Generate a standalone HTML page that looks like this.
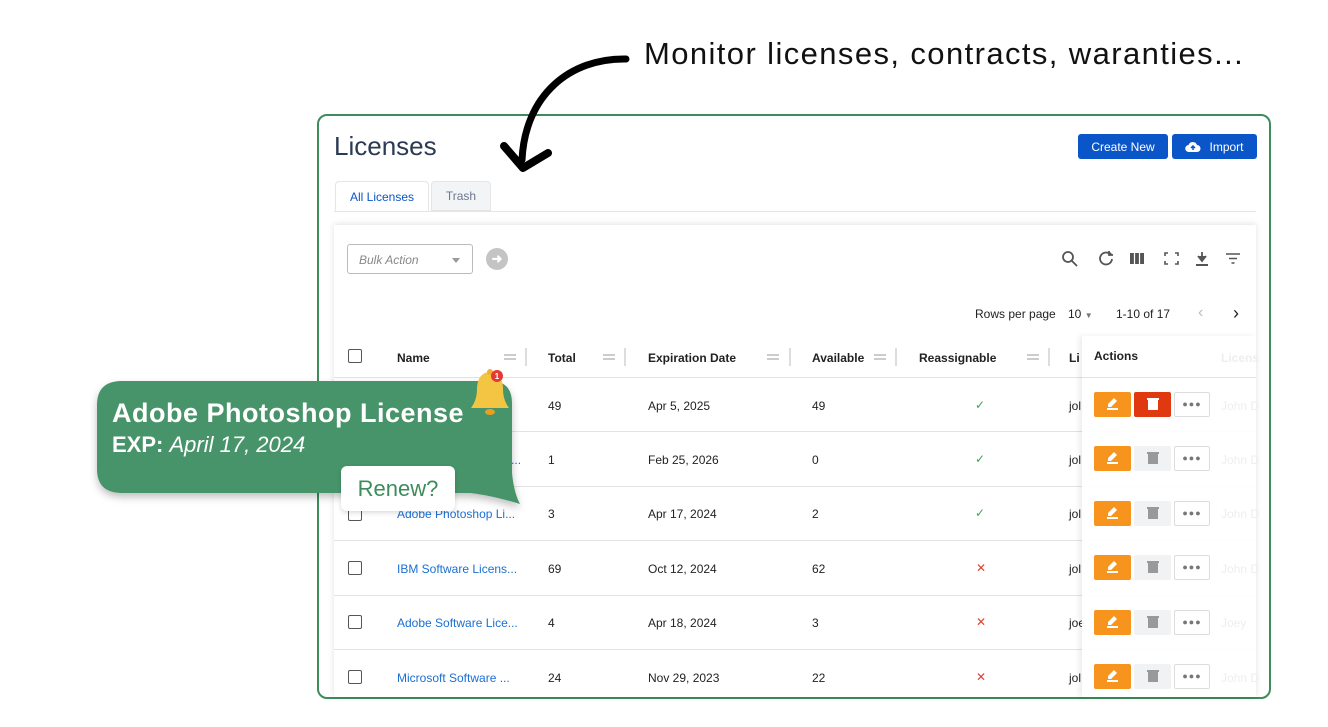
<!DOCTYPE html>
<html><head><style>
*{box-sizing:border-box;margin:0;padding:0}
body{width:1328px;height:727px;background:#fff;position:relative;overflow:hidden;font-family:"Liberation Sans",sans-serif;color:#222}
.a{position:absolute}
.card{left:317px;top:114px;width:954px;height:585px;border:2px solid #3d8c5c;border-radius:10px;overflow:hidden}
.btn{position:absolute;top:134px;height:25px;background:#0a55c8;color:#fff;font-size:12px;border-radius:3px;display:flex;align-items:center;justify-content:center}
.panel{left:334px;top:225px;width:922px;height:472px;background:#fff;box-shadow:0 -1px 6px rgba(0,0,0,.12)}
.cb{position:absolute;left:348px;width:14px;height:14px;border:1.5px solid #555;border-radius:2px}
.t{position:absolute;font-size:12px;color:#222}
.lnk{color:#1a6fd4}
.hd{font-weight:bold}
.line{position:absolute;left:334px;width:922px;height:1px;background:#e3e3e3}
.chk{color:#3aa55a}.x{color:#e04030}
.eb{position:absolute;left:1094px;width:37px;height:25px;background:#f7941d;border-radius:2px}
.eb::after{content:"";position:absolute;left:13px;top:16px;width:11px;height:1.5px;background:#fff}
.db{position:absolute;left:1134px;width:37px;height:25px;background:#f1f2f4;border-radius:2px}
.mb{position:absolute;left:1174px;width:36px;height:25px;border:1px solid #ddd;border-radius:2px;background:#fff;font-size:9px;color:#777;text-align:center;line-height:23px;letter-spacing:1px}
</style></head><body>
<div class="a" style="left:644px;top:36px;font-size:31px;color:#111;letter-spacing:1.4px">Monitor licenses, contracts, waranties...</div>
<div class="a card"></div>
<div class="a" style="left:334px;top:131px;font-size:26px;color:#2b3a55">Licenses</div>
<div class="btn" style="left:1078px;width:90px">Create New</div>
<div class="btn" style="left:1172px;width:85px"><svg width="16" height="12" viewBox="0 0 16 12" style="margin-right:8px"><path d="M4 11a3.5 3.5 0 0 1-.5-7A4.5 4.5 0 0 1 12 4a3.5 3.5 0 0 1 0 7z" fill="#fff"/><path d="M8 9V5M6 7l2-2 2 2" stroke="#0a55c8" stroke-width="1.5" fill="none"/></svg>Import</div>
<div class="a" style="left:335px;top:181px;width:94px;height:31px;border:1px solid #e5e5e5;border-bottom:none;border-radius:4px 4px 0 0;font-size:12px;color:#0a55c8;text-align:center;line-height:30px;background:#fff">All Licenses</div>
<div class="a" style="left:431px;top:181px;width:60px;height:30px;border:1px solid #e5e5e5;border-radius:4px 4px 0 0;background:#f3f4f6;font-size:12px;color:#6b7a90;text-align:center;line-height:29px">Trash</div>
<div class="a" style="left:334px;top:211px;width:922px;height:1px;background:#e5e5e5"></div>
<div class="a panel"></div>
<div class="a" style="left:347px;top:244px;width:126px;height:30px;border:1px solid #bbb;border-radius:3px;font-size:12px;font-style:italic;color:#888;padding:8px 11px">Bulk Action<span style="position:absolute;right:12px;top:13px;border:4px solid transparent;border-top:5px solid #999"></span></div>
<div class="a" style="left:486px;top:248px;width:22px;height:22px;border-radius:50%;background:#c4c4c4;color:#fff;font-size:13px;text-align:center;line-height:22px;font-weight:bold">➜</div>
<svg class="a" style="left:1060px;top:249px" width="190" height="20" viewBox="0 0 190 20" fill="none" stroke="#555" stroke-width="1.8">
<circle cx="8" cy="8" r="5"/><path d="M12 12l5 5"/>
<path d="M50 5a6 6 0 1 0 2 5"/><path d="M49 2v4h4" fill="#555"/>
<path d="M70 4h14v11H70z" fill="#555" stroke="none"/><path d="M74.5 4v11M79.5 4v11" stroke="#fff" stroke-width="1.2"/>
<path d="M105 7V4h3M115 4h3v3M118 12v3h-3M108 15h-3v-3" stroke-width="1.6"/>
<path d="M142 3v8M138 7l4 5 4-5" fill="#555"/><path d="M136 16h12" stroke-width="2"/>
<path d="M166 5h14M169 9.5h8M171.5 14h3" stroke-width="1.5"/>
</svg>
<div class="t" style="left:975px;top:307px">Rows per page</div>
<div class="t" style="left:1068px;top:307px">10 <span style="font-size:8px;color:#777">▼</span></div>
<div class="t" style="left:1116px;top:307px">1-10 of 17</div>
<div class="t" style="left:1198px;top:304px;font-size:16px;color:#bbb">‹</div>
<div class="t" style="left:1233px;top:303px;font-size:18px;color:#222">›</div>
<div class="cb" style="top:349px"></div>
<div class="t hd" style="left:397px;top:351px">Name</div>
<div class="t hd" style="left:548px;top:351px">Total</div>
<div class="t hd" style="left:648px;top:351px">Expiration Date</div>
<div class="t hd" style="left:812px;top:351px">Available</div>
<div class="t hd" style="left:919px;top:351px">Reassignable</div>
<div class="t hd" style="left:1069px;top:351px">Li</div>
<svg class="a" style="left:500px;top:346px" width="560" height="22"><g stroke="#bbb" stroke-width="1.5"><path d="M4 9h12M4 13h12M103 9h12M103 13h12M267 9h12M267 13h12M374 9h12M374 13h12M527 9h12M527 13h12"/></g><g stroke="#ddd" stroke-width="2"><path d="M26 2v18M125 2v18M290 2v18M396 2v18M549 2v18"/></g></svg>
<div class="line" style="top:377px"></div>
<div class="line" style="top:431px"></div>
<div class="line" style="top:486px"></div>
<div class="line" style="top:540px"></div>
<div class="line" style="top:595px"></div>
<div class="line" style="top:649px"></div>
<div class="cb" style="top:398px"></div><div class="t" style="left:548px;top:399px">49</div><div class="t" style="left:648px;top:399px">Apr 5, 2025</div><div class="t" style="left:812px;top:399px">49</div><div class="t chk" style="left:975px;top:398px">✓</div><div class="t" style="left:1069px;top:399px">jol</div>
<div class="cb" style="top:452px"></div><div class="t lnk" style="left:397px;top:453px">Adobe Photoshop Lic...</div><div class="t" style="left:548px;top:453px">1</div><div class="t" style="left:648px;top:453px">Feb 25, 2026</div><div class="t" style="left:812px;top:453px">0</div><div class="t chk" style="left:975px;top:452px">✓</div><div class="t" style="left:1069px;top:453px">jol</div>
<div class="cb" style="top:507px"></div><div class="t lnk" style="left:397px;top:507px">Adobe Photoshop Li...</div><div class="t" style="left:548px;top:507px">3</div><div class="t" style="left:648px;top:507px">Apr 17, 2024</div><div class="t" style="left:812px;top:507px">2</div><div class="t chk" style="left:975px;top:506px">✓</div><div class="t" style="left:1069px;top:507px">jol</div>
<div class="cb" style="top:561px"></div><div class="t lnk" style="left:397px;top:562px">IBM Software Licens...</div><div class="t" style="left:548px;top:562px">69</div><div class="t" style="left:648px;top:562px">Oct 12, 2024</div><div class="t" style="left:812px;top:562px">62</div><div class="t x" style="left:976px;top:561px">✕</div><div class="t" style="left:1069px;top:562px">jol</div>
<div class="cb" style="top:615px"></div><div class="t lnk" style="left:397px;top:616px">Adobe Software Lice...</div><div class="t" style="left:548px;top:616px">4</div><div class="t" style="left:648px;top:616px">Apr 18, 2024</div><div class="t" style="left:812px;top:616px">3</div><div class="t x" style="left:976px;top:615px">✕</div><div class="t" style="left:1069px;top:616px">joe</div>
<div class="cb" style="top:670px"></div><div class="t lnk" style="left:397px;top:671px">Microsoft Software ...</div><div class="t" style="left:548px;top:671px">24</div><div class="t" style="left:648px;top:671px">Nov 29, 2023</div><div class="t" style="left:812px;top:671px">22</div><div class="t x" style="left:976px;top:670px">✕</div><div class="t" style="left:1069px;top:671px">jol</div>
<div class="a" style="left:1082px;top:336px;width:174px;height:361px;background:rgba(255,255,255,.93);box-shadow:-3px 0 5px rgba(0,0,0,.07)"></div>
<div class="t hd" style="left:1094px;top:349px">Actions</div>
<div class="t" style="left:1221px;top:351px;color:#eee;font-weight:bold">Licens</div>
<div class="a" style="left:1082px;top:377px;width:174px;height:1px;background:#e3e3e3"></div>
<div class="eb" style="top:392px"></div><div class="db" style="top:392px;background:#e0380f"></div><div class="mb" style="top:392px">●●●</div>
<div class="eb" style="top:446px"></div><div class="db" style="top:446px"></div><div class="mb" style="top:446px">●●●</div>
<div class="eb" style="top:501px"></div><div class="db" style="top:501px"></div><div class="mb" style="top:501px">●●●</div>
<div class="eb" style="top:555px"></div><div class="db" style="top:555px"></div><div class="mb" style="top:555px">●●●</div>
<div class="eb" style="top:610px"></div><div class="db" style="top:610px"></div><div class="mb" style="top:610px">●●●</div>
<div class="eb" style="top:664px"></div><div class="db" style="top:664px"></div><div class="mb" style="top:664px">●●●</div>
<svg class="a" style="left:1094px;top:392px" width="120" height="300"><g fill="#fff"><path d="M20 6l3 3-6 6h-3v-3zM20 60l3 3-6 6h-3v-3zM20 115l3 3-6 6h-3v-3zM20 169l3 3-6 6h-3v-3zM20 224l3 3-6 6h-3v-3zM20 278l3 3-6 6h-3v-3z"/></g>
<path d="M54 8h10v10h-10zM53 6h12v2h-12z" fill="#fff"/>
<g fill="#999"><path d="M54 62h10v10h-10zM53 60h12v2h-12zM54 117h10v10h-10zM53 115h12v2h-12zM54 171h10v10h-10zM53 169h12v2h-12zM54 226h10v10h-10zM53 224h12v2h-12zM54 280h10v10h-10zM53 278h12v2h-12z"/></g></svg>
<div class="t" style="left:1221px;top:399px;color:#eee">John D</div>
<div class="t" style="left:1221px;top:453px;color:#eee">John D</div>
<div class="t" style="left:1221px;top:507px;color:#eee">John D</div>
<div class="t" style="left:1221px;top:562px;color:#eee">John D</div>
<div class="t" style="left:1221px;top:616px;color:#eee">Joey</div>
<div class="t" style="left:1221px;top:671px;color:#eee">John D</div>
<svg class="a" style="left:0;top:0" width="700" height="200" fill="none" stroke="#000" stroke-linecap="round" stroke-linejoin="round">
<path d="M626 59C570 58 525 95 522 160" stroke-width="7"/>
<path d="M504 146L523 168L548 153" stroke-width="8"/>
</svg>
<svg class="a" style="left:90px;top:375px" width="440" height="140"><defs><filter id="s" x="-10%" y="-10%" width="120%" height="130%"><feDropShadow dx="0" dy="4" stdDeviation="4" flood-opacity=".25"/></filter></defs>
<path d="M32 6H400Q422 6 422 28V98Q424 118 430 129Q400 120 380 118H32Q7 118 7 94V30Q7 6 32 6Z" fill="#46946b" filter="url(#s)"/></svg>
<div class="a" style="left:112px;top:398px;font-size:27px;font-weight:bold;color:#fff;letter-spacing:.5px">Adobe Photoshop License</div>
<div class="a" style="left:112px;top:432px;font-size:22px;color:#fff"><b>EXP:</b> <i>April 17, 2024</i></div>
<div class="a" style="left:341px;top:466px;width:114px;height:45px;background:#fff;border-radius:6px;box-shadow:0 2px 5px rgba(0,0,0,.15);font-size:22px;color:#3d8c5c;text-align:center;line-height:45px">Renew?</div>
<svg class="a" style="left:465px;top:366px" width="50" height="55"><path d="M25 6c-9 0-13 8-13 17 0 9-3 15-6 19h38c-3-4-6-10-6-19 0-9-4-17-13-17z" fill="#f4c542"/><circle cx="25" cy="6" r="3" fill="#f0b030"/><ellipse cx="25" cy="46" rx="5" ry="3" fill="#e8a020"/><circle cx="32" cy="10" r="6" fill="#e53935"/><text x="32" y="13" font-size="8" font-weight="bold" fill="#fff" text-anchor="middle" font-family="Liberation Sans">1</text></svg>
</body></html>
